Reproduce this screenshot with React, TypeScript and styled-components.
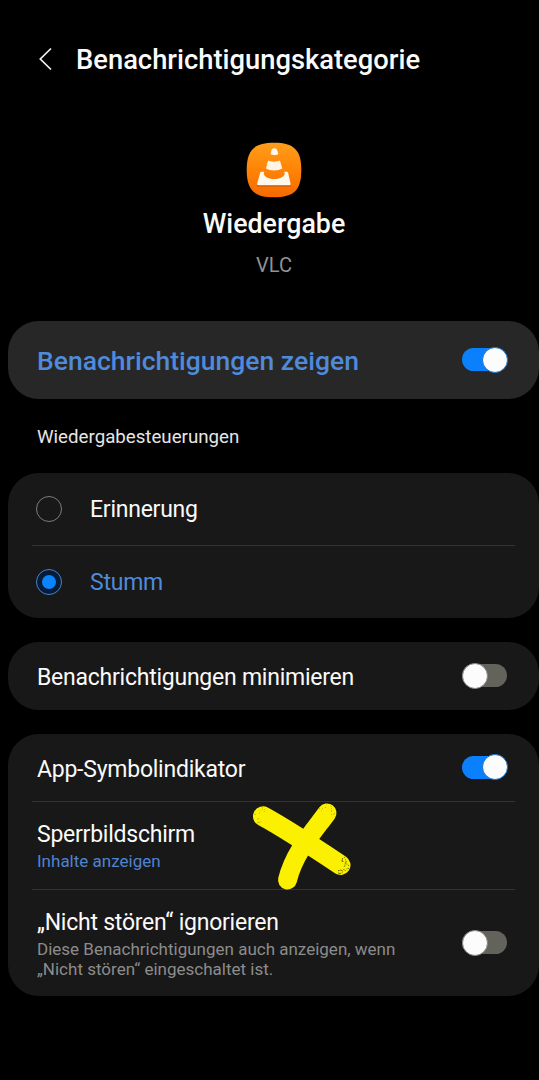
import React from 'react';
import styled, { createGlobalStyle } from 'styled-components';

const GlobalStyle = createGlobalStyle`
  * { box-sizing: border-box; }
  body { margin: 0; background: #000; font-family: Roboto, sans-serif; color: #fafafa; }
`;

const Screen = styled.main`
  position: relative;
  width: 539px;
  height: 1080px;
  overflow: hidden;
  background: #000;
  padding: 40px 0 0 8px;
`;

const Header = styled.header`
  display: flex;
  align-items: center;
  height: 40px;
  padding-left: 30px;
`;

const BackIcon = styled.svg`
  width: 14px;
  height: 24px;
  margin-right: 24px;
  margin-top: -2px;
`;

const Title = styled.h1`
  margin: 0;
  font-size: 27.35px;
  line-height: 40px;
  font-weight: 500;
  white-space: nowrap;
`;

const Hero = styled.section`
  display: flex;
  flex-direction: column;
  align-items: center;
  height: 241px;
  padding: 62px 0 0 1px;
`;

const AppIcon = styled.svg`
  width: 56px;
  height: 56px;
`;

const HeroName = styled.h2`
  margin: 11px 0 0;
  font-size: 26.8px;
  line-height: 30px;
  font-weight: 500;
`;

const HeroApp = styled.p`
  margin: 14px 0 0;
  font-size: 20px;
  line-height: 24px;
  color: #929292;
`;

const Card = styled.section<{ $tone?: string; $gap?: number }>`
  background: ${({ $tone }) => $tone ?? '#181818'};
  border-radius: 31px;
  margin-bottom: ${({ $gap }) => $gap ?? 0}px;
`;

const Row = styled.div<{ $h: number; $divided?: boolean }>`
  display: flex;
  align-items: center;
  height: ${({ $h }) => $h}px;
  margin: 0 24px;
  padding: 0 8px 0 5px;
  border-bottom: ${({ $divided }) => ($divided ? '1px solid #333' : 'none')};
`;

const Texts = styled.div<{ $shift?: number }>`
  flex: 1;
  padding-top: ${({ $shift }) => $shift ?? 0}px;
`;

const Label = styled.div<{ $accent?: boolean; $strong?: boolean }>`
  font-size: ${({ $strong }) => ($strong ? 26.5 : 23)}px;
  letter-spacing: ${({ $strong }) => ($strong ? '0' : '-0.24px')};
  line-height: 30px;
  font-weight: ${({ $strong }) => ($strong ? 500 : 400)};
  color: ${({ $accent }) => ($accent ? '#4f8adb' : '#fafafa')};
  white-space: nowrap;
`;

const Hint = styled.div<{ $accent?: boolean }>`
  font-size: 17px;
  line-height: 19.5px;
  margin-top: 2px;
  color: ${({ $accent }) => ($accent ? '#4f83cf' : '#8c8c8c')};
  white-space: nowrap;
`;

const SectionTitle = styled.h3`
  margin: 0;
  height: 74px;
  padding: 0 29px;
  font-size: 18.7px;
  line-height: 76px;
  font-weight: 400;
  color: #e6e6e6;
`;

const Track = styled.span<{ $on: boolean }>`
  display: flex;
  align-items: center;
  justify-content: ${({ $on }) => ($on ? 'flex-end' : 'flex-start')};
  width: 45px;
  height: 23px;
  margin-bottom: 1px;
  border-radius: 12px;
  background: ${({ $on }) => ($on ? '#0a80fc' : '#63635c')};
`;

const Knob = styled.span<{ $on: boolean }>`
  flex: none;
  width: 26px;
  height: 26px;
  margin: ${({ $on }) => ($on ? '0 -1px' : '0 0 0 -0.5px')};
  border-radius: 50%;
  background: #fcfcfc;
  border: 1px solid ${({ $on }) => ($on ? '#1673d2' : '#85857f')};
`;

const Radio = styled.span<{ $on?: boolean }>`
  display: grid;
  place-items: center;
  width: 26px;
  height: 26px;
  margin: 0 28px 0 -1px;
  border-radius: 50%;
  border: 1.4px solid ${({ $on }) => ($on ? '#4a82c8' : '#7c7c7c')};
  background: ${({ $on }) => ($on ? '#071c38' : 'transparent')};
  &::after {
    content: '';
    width: 14px;
    height: 14px;
    border-radius: 50%;
    background: ${({ $on }) => ($on ? '#0a84ff' : 'transparent')};
  }
`;

const Mark = styled.svg`
  position: absolute;
  left: 245px;
  top: 795px;
  width: 115px;
  height: 100px;
`;

function Toggle({ on = false }: { on?: boolean }) {
  return (
    <Track $on={on} role="switch" aria-checked={on}>
      <Knob $on={on} />
    </Track>
  );
}

const specks = Array.from({ length: 54 }, (_, i) => {
  const spot = i < 28 ? [340, 865] : i < 42 ? [263, 816] : [327, 813];
  const angle = i * 2.4;
  const dir = i < 28 ? 0.3 : i < 42 ? 3.5 : -1.2;
  const a = dir + Math.sin(angle) * 1.5;
  const r = 4.5 + ((i * 7) % 10) * 0.5;
  return { x: spot[0] + Math.cos(a) * r, y: spot[1] + Math.sin(a) * r, r: i < 28 ? 0.5 : 0.35 };
});

export default function App() {
  return (
    <>
      <GlobalStyle />
      <Screen>
        <Header>
          <BackIcon viewBox="0 0 14 24" fill="none" stroke="#f2f2f2" strokeWidth="1.7">
            <path d="M13 1.5 2.3 12 13 22.5" />
          </BackIcon>
          <Title>Benachrichtigungskategorie</Title>
        </Header>

        <Hero>
          <AppIcon viewBox="0 0 56 56">
            <defs>
              <linearGradient id="tile" x1="0" y1="0" x2="0" y2="1">
                <stop offset="0" stopColor="#ff9d1c" />
                <stop offset="0.5" stopColor="#ff8406" />
                <stop offset="1" stopColor="#f66800" />
              </linearGradient>
            </defs>
            <path
              d="M28 .7C8 .7.7 8 .7 28S8 55.3 28 55.3 55.3 48 55.3 28 48 .7 28 .7Z"
              fill="url(#tile)"
            />
            <path d="M11 43h33.500v1.500H11Z" fill="#c85500" />
            <path
              d="M15.300 29.700H18.200L17.800 32C19 35.400 23 37 28.200 37S37.500 35.400 38.700 32L38.300 29.700H40.800Q41.800 29.700 42.100 30.700L44.600 41.800Q44.900 43.200 43.600 43.200H12.200Q10.800 43.200 11.100 41.800L14.200 30.700Q14.500 29.700 15.300 29.700Z"
              fill="#fff8ee"
            />
            <path
              d="M22.100 18.500C25 20 31 20 33.900 18.500L36.300 26.500C32 29 24.200 29 19.900 26.500Z"
              fill="#fff4e6"
            />
            <path
              d="M28.300 6.300C26.700 6.300 25.800 7.100 25.500 8.300L24.500 12C26.500 13.300 30.300 13.300 32.300 12L31.200 8.300C30.800 7.100 29.900 6.300 28.300 6.300Z"
              fill="#fff8ee"
            />
          </AppIcon>
          <HeroName>Wiedergabe</HeroName>
          <HeroApp>VLC</HeroApp>
        </Hero>

        <Card $tone="#272727">
          <Row $h={78}>
            <Texts $shift={2}>
              <Label $accent $strong>Benachrichtigungen zeigen</Label>
            </Texts>
            <Toggle on />
          </Row>
        </Card>

        <SectionTitle>Wiedergabesteuerungen</SectionTitle>

        <Card $gap={24}>
          <Row $h={73} $divided>
            <Radio />
            <Texts $shift={2}>
              <Label>Erinnerung</Label>
            </Texts>
          </Row>
          <Row $h={72}>
            <Radio $on />
            <Texts $shift={2}>
              <Label $accent>Stumm</Label>
            </Texts>
          </Row>
        </Card>

        <Card $gap={24}>
          <Row $h={68}>
            <Texts $shift={4}>
              <Label>Benachrichtigungen minimieren</Label>
            </Texts>
            <Toggle />
          </Row>
        </Card>

        <Card>
          <Row $h={68} $divided>
            <Texts $shift={4}>
              <Label>App-Symbolindikator</Label>
            </Texts>
            <Toggle on />
          </Row>
          <Row $h={88} $divided>
            <Texts $shift={1}>
              <Label>Sperrbildschirm</Label>
              <Hint $accent>Inhalte anzeigen</Hint>
            </Texts>
          </Row>
          <Row $h={106}>
            <Texts $shift={1}>
              <Label>„Nicht stören“ ignorieren</Label>
              <Hint>
                Diese Benachrichtigungen auch anzeigen, wenn
                <br />
                „Nicht stören“ eingeschaltet ist.
              </Hint>
            </Texts>
            <Toggle />
          </Row>
        </Card>

        <Mark viewBox="245 795 115 100" fill="none" stroke="#fbf000" strokeLinecap="round">
          <path d="M263 816.300C279 825 318 850 340.500 865" strokeWidth="20" />
          <path d="M327 813C313 832 294 853 287.500 880" strokeWidth="19" />
          {specks.map((s, i) => (
            <circle key={i} cx={s.x} cy={s.y} r={s.r} fill="#4a4706" stroke="none" />
          ))}
        </Mark>
      </Screen>
    </>
  );
}
